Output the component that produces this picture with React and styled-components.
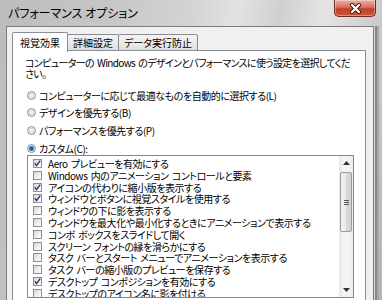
import React from 'react';
import styled, { createGlobalStyle } from 'styled-components';

const FONT = '"Noto Sans CJK JP", "Noto Sans", sans-serif';

const options = [
  { label: 'コンピューターに応じて最適なものを自動的に選択する(L)', on: false },
  { label: 'デザインを優先する(B)', on: false },
  { label: 'パフォーマンスを優先する(P)', on: false },
  { label: 'カスタム(C):', on: true },
];

const effects = [
  { label: 'Aero プレビューを有効にする', on: true },
  { label: 'Windows 内のアニメーション コントロールと要素', on: false },
  { label: 'アイコンの代わりに縮小版を表示する', on: true },
  { label: 'ウィンドウとボタンに視覚スタイルを使用する', on: true },
  { label: 'ウィンドウの下に影を表示する', on: false },
  { label: 'ウィンドウを最大化や最小化するときにアニメーションで表示する', on: false },
  { label: 'コンボ ボックスをスライドして開く', on: false },
  { label: 'スクリーン フォントの縁を滑らかにする', on: false },
  { label: 'タスク バーとスタート メニューでアニメーションを表示する', on: false },
  { label: 'タスク バーの縮小版のプレビューを保存する', on: false },
  { label: 'デスクトップ コンポジションを有効にする', on: true },
  { label: 'デスクトップのアイコン名に影を付ける', on: false },
];

const App = () => (
  <>
    <GlobalStyle />
    <Window>
      <TitleBar>
        <Title>パフォーマンス オプション</Title>
        <CloseButton>
          <svg width="13" height="11" viewBox="0 0 13 11">
            <path d="M3 2 L10 9 M10 2 L3 9" stroke="#4a1a12" strokeWidth="4" strokeLinecap="round" />
            <path d="M3 2 L10 9 M10 2 L3 9" stroke="#ffffff" strokeWidth="2.2" strokeLinecap="round" />
          </svg>
        </CloseButton>
      </TitleBar>
      <Dialog>
        <TabStrip>
          <Tab active>視覚効果</Tab>
          <Tab>詳細設定</Tab>
          <Tab>データ実行防止</Tab>
        </TabStrip>
        <Panel>
          <Description>
            コンピューターの Windows のデザインとパフォーマンスに使う設定を選択してくだ
            <br />
            さい。
          </Description>
          <RadioGroup>
            {options.map((item) => (
              <RadioRow key={item.label}>
                <Radio on={item.on} />
                <Label>{item.label}</Label>
              </RadioRow>
            ))}
          </RadioGroup>
          <ListBox>
            <Items>
              {effects.map((item) => (
                <CheckRow key={item.label}>
                  <CheckBox>
                    {item.on && (
                      <svg width="9" height="9" viewBox="0 0 9 9">
                        <path d="M1.8 4.3 L3.6 6.6 L7.2 1.6" fill="none" stroke="#22358a" strokeWidth="1.4" />
                      </svg>
                    )}
                  </CheckBox>
                  <Label>{item.label}</Label>
                </CheckRow>
              ))}
            </Items>
            <ScrollBar>
              <ArrowButton>
                <svg width="7" height="4" viewBox="0 0 7 4"><path d="M0 4 L3.5 0 L7 4 Z" fill="#333" /></svg>
              </ArrowButton>
              <Thumb>
                <Grip />
                <Grip />
                <Grip />
              </Thumb>
              <Track />
              <ArrowButton>
                <svg width="7" height="4" viewBox="0 0 7 4"><path d="M0 0 L3.5 4 L7 0 Z" fill="#333" /></svg>
              </ArrowButton>
            </ScrollBar>
          </ListBox>
        </Panel>
      </Dialog>
    </Window>
  </>
);

const GlobalStyle = createGlobalStyle`
  body {
    margin: 0;
    background: #ffffff;
    font-family: ${FONT};
  }
`;

const Window = styled.div`
  width: 382px;
  height: 300px;
  overflow: hidden;
  display: flex;
  flex-direction: column;
  background: linear-gradient(100deg, #bcbcbc 0%, #c6c6c6 25%, #d4d4d4 45%, #e2e2e2 55%, #d0d0d0 65%, #e4e4e4 75%, #c8c8c8 90%, #b4b4b4 100%);
`;

const TitleBar = styled.div`
  height: 26px;
  flex: none;
  display: flex;
  justify-content: space-between;
  align-items: flex-start;
  padding: 0 6px 0 8px;
`;

const Title = styled.div`
  font-family: ${FONT};
  font-size: 12px;
  line-height: 26px;
  color: #000;
  font-feature-settings: "palt" 1;
`;

const CloseButton = styled.div`
  width: 42px;
  height: 17px;
  box-sizing: border-box;
  display: flex;
  align-items: center;
  justify-content: center;
  border: 1px solid #6e2c20;
  border-top: none;
  border-radius: 0 0 5px 5px;
  background: linear-gradient(180deg, #e9b2a6 0%, #d8715d 45%, #c0412b 55%, #c9553a 100%);
  box-shadow: inset 0 0 0 1px rgba(255, 255, 255, 0.35);
`;

const Dialog = styled.div`
  flex: 1;
  display: flex;
  flex-direction: column;
  margin: 0 8px 0 6px;
  padding: 4px 7px 0 5px;
  background: #f0f0f0;
  border: 1px solid #7c7c7c;
  border-bottom: none;
  box-shadow: 1px 0 0 #d8d8d8, 3px 0 0 #888888, 5px 0 0 #a8a8a8;
`;

const TabStrip = styled.div`
  height: 20px;
  display: flex;
  align-items: flex-end;
`;

const Tab = styled.div`
  position: relative;
  z-index: ${(p) => (p.active ? 1 : 0)};
  height: ${(p) => (p.active ? 20 : 17)}px;
  margin-bottom: ${(p) => (p.active ? -1 : 0)}px;
  margin-left: ${(p) => (p.active ? 0 : -1)}px;
  box-sizing: border-box;
  padding: 0 ${(p) => (p.active ? 7 : 5)}px;
  display: flex;
  align-items: center;
  font-family: ${FONT};
  font-size: 10px;
  color: #000;
  font-feature-settings: "palt" 1;
  border: 1px solid #898c95;
  border-bottom: ${(p) => (p.active ? 'none' : '1px solid #898c95')};
  border-radius: 2px 2px 0 0;
  background: ${(p) => (p.active ? '#ffffff' : 'linear-gradient(180deg, #f4f4f4 0%, #ebebeb 50%, #dedede 100%)')};
`;

const Panel = styled.div`
  flex: 1;
  background: #ffffff;
  border: 1px solid #898c95;
  border-bottom: none;
  width: 354px;
  box-sizing: border-box;
  margin-top: -1px;
  padding: 5.5px 0 0 12px;
  display: flex;
  flex-direction: column;
`;

const Description = styled.div`
  font-size: 10px;
  line-height: 11px;
  color: #000;
  white-space: nowrap;
  letter-spacing: -0.65px;
  word-spacing: 1.5px;
  font-feature-settings: "palt" 1;
`;

const RadioGroup = styled.div`
  display: flex;
  flex-direction: column;
  gap: 5.7px;
  margin: 10.5px 0 0 2px;
`;

const RadioRow = styled.div`
  height: 12px;
  display: flex;
  align-items: center;
  gap: 3px;
`;

const Radio = styled.span`
  width: 9px;
  height: 9px;
  box-sizing: border-box;
  border-radius: 50%;
  border: 1px solid #8d8d8d;
  background: ${(p) => (p.on
    ? 'radial-gradient(circle, #1c5fb8 0 1.6px, #7fb0e6 2.6px, #f2f2f2 3.2px)'
    : 'radial-gradient(circle, #f2f2f2 0 1.2px, #cfcfcf 2.6px, #f6f6f6 3.2px)')};
`;

const Label = styled.span`
  font-size: 10px;
  line-height: 11px;
  color: #000;
  white-space: nowrap;
  letter-spacing: -0.45px;
  word-spacing: 1.5px;
  font-feature-settings: "palt" 1;
`;

const ListBox = styled.div`
  margin: 1px 0 0 2px;
  width: 327px;
  height: 143px;
  box-sizing: border-box;
  border: 1px solid #828790;
  display: flex;
  overflow: hidden;
`;

const Items = styled.div`
  flex: 1;
  padding: 1.6px 0 0 5px;
  overflow: hidden;
`;

const CheckRow = styled.div`
  height: 11.8px;
  display: flex;
  align-items: center;
  gap: 6px;
`;

const CheckBox = styled.span`
  flex: none;
  width: 9px;
  height: 9px;
  box-sizing: border-box;
  border: 1px solid #8e8f8f;
  background: linear-gradient(135deg, #d6d6d6 0%, #f4f4f4 70%, #ffffff 100%);
  display: flex;
  align-items: center;
  justify-content: center;

  svg {
    margin: -1px;
  }
`;

const ScrollBar = styled.div`
  width: 14px;
  flex: none;
  display: flex;
  flex-direction: column;
  background: linear-gradient(90deg, #e8e8e8 0%, #f4f4f4 30%, #f4f4f4 70%, #ebebeb 100%);
`;

const ArrowButton = styled.div`
  height: 14px;
  display: flex;
  align-items: center;
  justify-content: center;
`;

const Thumb = styled.div`
  height: 60px;
  margin: 2px 1px 0;
  box-sizing: border-box;
  border: 1px solid #9b9b9b;
  border-radius: 2px;
  background: linear-gradient(90deg, #f2f2f2 0%, #ebebeb 45%, #d9d9d9 55%, #d2d2d2 100%);
  display: flex;
  flex-direction: column;
  align-items: center;
  justify-content: center;
  gap: 1px;
`;

const Grip = styled.span`
  width: 5px;
  height: 1px;
  background: #555;
`;

const Track = styled.div`
  flex: 1;
`;

export default App;
